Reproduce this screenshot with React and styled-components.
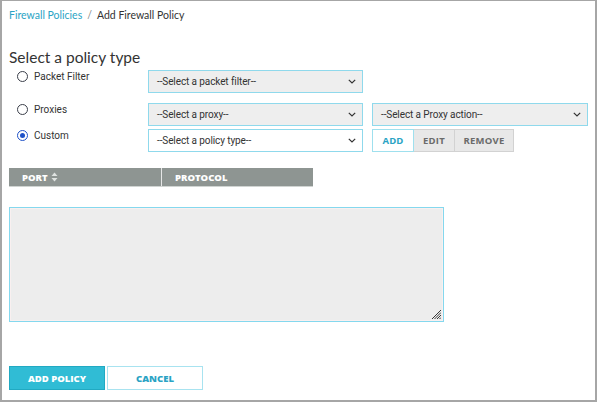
import React from "react";
import styled, { createGlobalStyle } from "styled-components";

const Global = createGlobalStyle`
  html, body { margin: 0; padding: 0; background: #fff; }
  * { box-sizing: border-box; }
`;

const Frame = styled.div`
  width: 597px;
  height: 402px;
  border-style: solid;
  border-color: #a6a6a6;
  border-width: 1px 2px 2px 2px;
  padding: 7px 0 0 7px;
  font-family: "Lato", "Open Sans", sans-serif;
  color: #333;
  overflow: hidden;
`;

const Breadcrumb = styled.div`
  display: flex;
  gap: 5px;
  font-size: 10.5px;
  line-height: 14px;
  height: 14px;
`;

const Crumb = styled.span`
  color: ${(p) => (p.$link ? "#2aa3c4" : "#333")};
`;

const Sep = styled.span`
  color: #888;
`;

const Heading = styled.h2`
  margin: 26px 0 0;
  font-weight: 400;
  font-size: 15.5px;
  line-height: 18px;
  color: #333;
`;

const TypeList = styled.div`
  margin-top: 4px;
  display: flex;
  flex-direction: column;
`;

const TypeRow = styled.div`
  display: flex;
  align-items: flex-start;
  gap: 9px;
  margin-top: ${(p) => p.$mt || 0}px;
`;

const RadioLabel = styled.label`
  width: 130px;
  flex: none;
  display: flex;
  align-items: center;
  gap: 6px;
  padding-left: 8px;
  height: 13px;
  font-family: "Roboto", "Liberation Sans", sans-serif;
  font-size: 10px;
  color: #333;
`;

const Circle = styled.span`
  flex: none;
  width: 11px;
  height: 11px;
  border-radius: 50%;
  border: 1.5px solid ${(p) => (p.$checked ? "#1f52c8" : "#3b3f4a")};
  display: flex;
  align-items: center;
  justify-content: center;
  &::after {
    content: "";
    width: 5px;
    height: 5px;
    border-radius: 50%;
    background: ${(p) => (p.$checked ? "#1f52c8" : "transparent")};
  }
`;

const Select = styled.div`
  flex: none;
  height: 23px;
  width: ${(p) => p.$w || 216}px;
  border: 1px solid #8fd9ec;
  background: ${(p) => (p.$white ? "#fff" : "#eeeeee")};
  display: flex;
  align-items: center;
  justify-content: space-between;
  padding: 0 6px 0 8px;
  font-family: "Roboto", "Liberation Sans", sans-serif;
  font-size: 10px;
  font-variant-ligatures: none;
  font-feature-settings: "liga" 0, "calt" 0;
  letter-spacing: -0.1px;
  color: #333;
`;

const Chevron = () => (
  <svg width="8" height="5" viewBox="0 0 8 5">
    <path d="M0.8 0.8 L4 4 L7.2 0.8" fill="none" stroke="#333" strokeWidth="1.2" />
  </svg>
);

const BtnGroup = styled.div`
  display: flex;
  height: 23px;
`;

const SmallBtn = styled.div`
  height: 23px;
  width: ${(p) => p.$w}px;
  display: flex;
  align-items: center;
  justify-content: center;
  font-family: "Open Sans", "Liberation Sans", sans-serif;
  font-weight: 700;
  font-size: 9.5px;
  letter-spacing: 0.2px;
  color: ${(p) => (p.$primary ? "#2aa3c4" : "#6b6b6b")};
  background: ${(p) => (p.$primary ? "#fff" : "#e8e8e8")};
  border: 1px solid ${(p) => (p.$primary ? "#9fe0ee" : "#d2d2d2")};
  border-left-width: ${(p) => (p.$first ? 1 : 0)}px;
`;

const TableHead = styled.div`
  margin-top: 16px;
  display: grid;
  grid-template-columns: 152px 152px;
  width: 304px;
  height: 19px;
  background: #8e9592;
  border-bottom: 1px solid #d0d4d2;
`;

const Th = styled.div`
  display: flex;
  align-items: center;
  gap: 3px;
  padding-left: 13px;
  font-family: "Open Sans", "Liberation Sans", sans-serif;
  font-weight: 800;
  font-size: 9.5px;
  color: #fff;
  border-left: ${(p) => (p.$sep ? "1px solid #e6e6e6" : "0")};
`;

const SortIcon = () => (
  <svg width="7" height="10" viewBox="0 0 7 10">
    <path d="M3.5 0.5 L6.5 4 L0.5 4 Z" fill="#dfe3e1" />
    <path d="M3.5 9.5 L6.5 6 L0.5 6 Z" fill="#dfe3e1" />
  </svg>
);

const TextArea = styled.div`
  position: relative;
  margin-top: 20px;
  width: 435px;
  height: 115px;
  background: #ededed;
  border: 1px solid #84d8ee;
  box-shadow: inset 0 0 0 1px #f9f0f0;
`;

const Grip = styled.svg`
  position: absolute;
  right: 2px;
  bottom: 2px;
`;

const Actions = styled.div`
  margin-top: 44px;
  display: flex;
  gap: 2px;
`;

const ActionBtn = styled.div`
  width: 96px;
  height: 24px;
  display: flex;
  align-items: center;
  justify-content: center;
  font-family: "Open Sans", "Liberation Sans", sans-serif;
  font-weight: 800;
  font-size: 9.5px;
  color: ${(p) => (p.$primary ? "#fff" : "#2aa3c4")};
  background: ${(p) => (p.$primary ? "#30bcd5" : "#fff")};
  border: 1px solid ${(p) => (p.$primary ? "#21a9c2" : "#a8e3f0")};
`;

export default function App() {
  return (
    <>
      <Global />
      <Frame>
        <Breadcrumb>
          <Crumb $link>Firewall Policies</Crumb>
          <Sep>/</Sep>
          <Crumb>Add Firewall Policy</Crumb>
        </Breadcrumb>
        <Heading>Select a policy type</Heading>
        <TypeList>
          <TypeRow>
            <RadioLabel>
              <Circle />
              Packet Filter
            </RadioLabel>
            <Select $w={215}>
              --Select a packet filter--
              <Chevron />
            </Select>
          </TypeRow>
          <TypeRow $mt={10}>
            <RadioLabel>
              <Circle />
              Proxies
            </RadioLabel>
            <Select $w={215}>
              --Select a proxy--
              <Chevron />
            </Select>
            <Select $w={216}>
              --Select a Proxy action--
              <Chevron />
            </Select>
          </TypeRow>
          <TypeRow $mt={3}>
            <RadioLabel>
              <Circle $checked />
              Custom
            </RadioLabel>
            <Select $w={215} $white>
              --Select a policy type--
              <Chevron />
            </Select>
            <BtnGroup>
              <SmallBtn $w={42} $primary $first>
                ADD
              </SmallBtn>
              <SmallBtn $w={41}>EDIT</SmallBtn>
              <SmallBtn $w={59}>REMOVE</SmallBtn>
            </BtnGroup>
          </TypeRow>
        </TypeList>
        <TableHead>
          <Th>
            PORT <SortIcon />
          </Th>
          <Th $sep>PROTOCOL</Th>
        </TableHead>
        <TextArea>
          <Grip width="10" height="10" viewBox="0 0 10 10">
            <path
              d="M10 1 L1 10 M10 3.5 L3.5 10 M10 6 L6 10 M10 8.5 L8.5 10"
              stroke="#222"
              strokeWidth="0.9"
            />
          </Grip>
        </TextArea>
        <Actions>
          <ActionBtn $primary>ADD POLICY</ActionBtn>
          <ActionBtn>CANCEL</ActionBtn>
        </Actions>
      </Frame>
    </>
  );
}
